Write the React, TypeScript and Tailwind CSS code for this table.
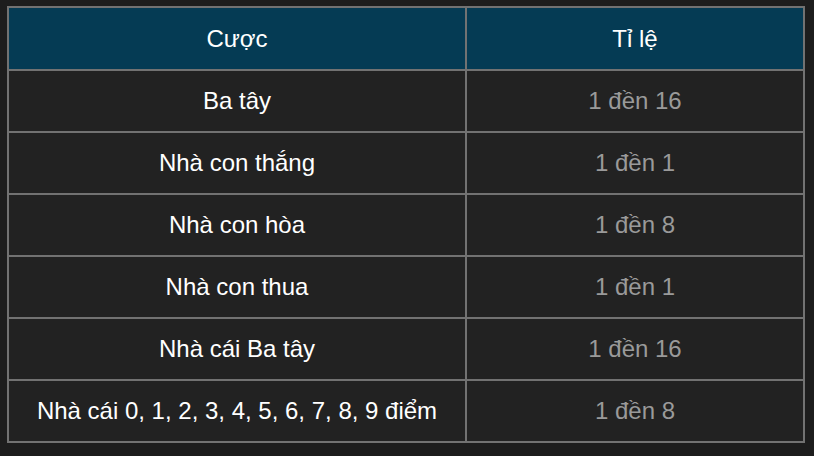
import React from "react";

const rows: [string, string][] = [
  ["Ba tây", "1 đền 16"],
  ["Nhà con thắng", "1 đền 1"],
  ["Nhà con hòa", "1 đền 8"],
  ["Nhà con thua", "1 đền 1"],
  ["Nhà cái Ba tây", "1 đền 16"],
  ["Nhà cái 0, 1, 2, 3, 4, 5, 6, 7, 8, 9 điểm", "1 đền 8"],
];

export default function App() {
  return (
    <div
      className="w-[814px] h-[456px] bg-[#1d1d1d] pt-[6px] pl-[7px]"
      style={{ fontFamily: '"Liberation Sans", Arial, sans-serif' }}
    >
      <table className="w-[798px] border-collapse border-2 border-[#727272] text-[24px] leading-none">
        <thead>
          <tr className="bg-[#053b54]">
            <th className="h-[63px] w-[458px] border-2 border-[#727272] font-normal text-white text-center">
              Cược
            </th>
            <th className="h-[63px] border-2 border-[#727272] font-normal text-white text-center">
              Tỉ lệ
            </th>
          </tr>
        </thead>
        <tbody>
          {rows.map(([a, b]) => (
            <tr key={a} className="bg-[#222222]">
              <td className="h-[62px] border-2 border-[#727272] text-white text-center">{a}</td>
              <td className="h-[62px] border-2 border-[#727272] text-[#9a9a9a] text-center">{b}</td>
            </tr>
          ))}
        </tbody>
      </table>
    </div>
  );
}
